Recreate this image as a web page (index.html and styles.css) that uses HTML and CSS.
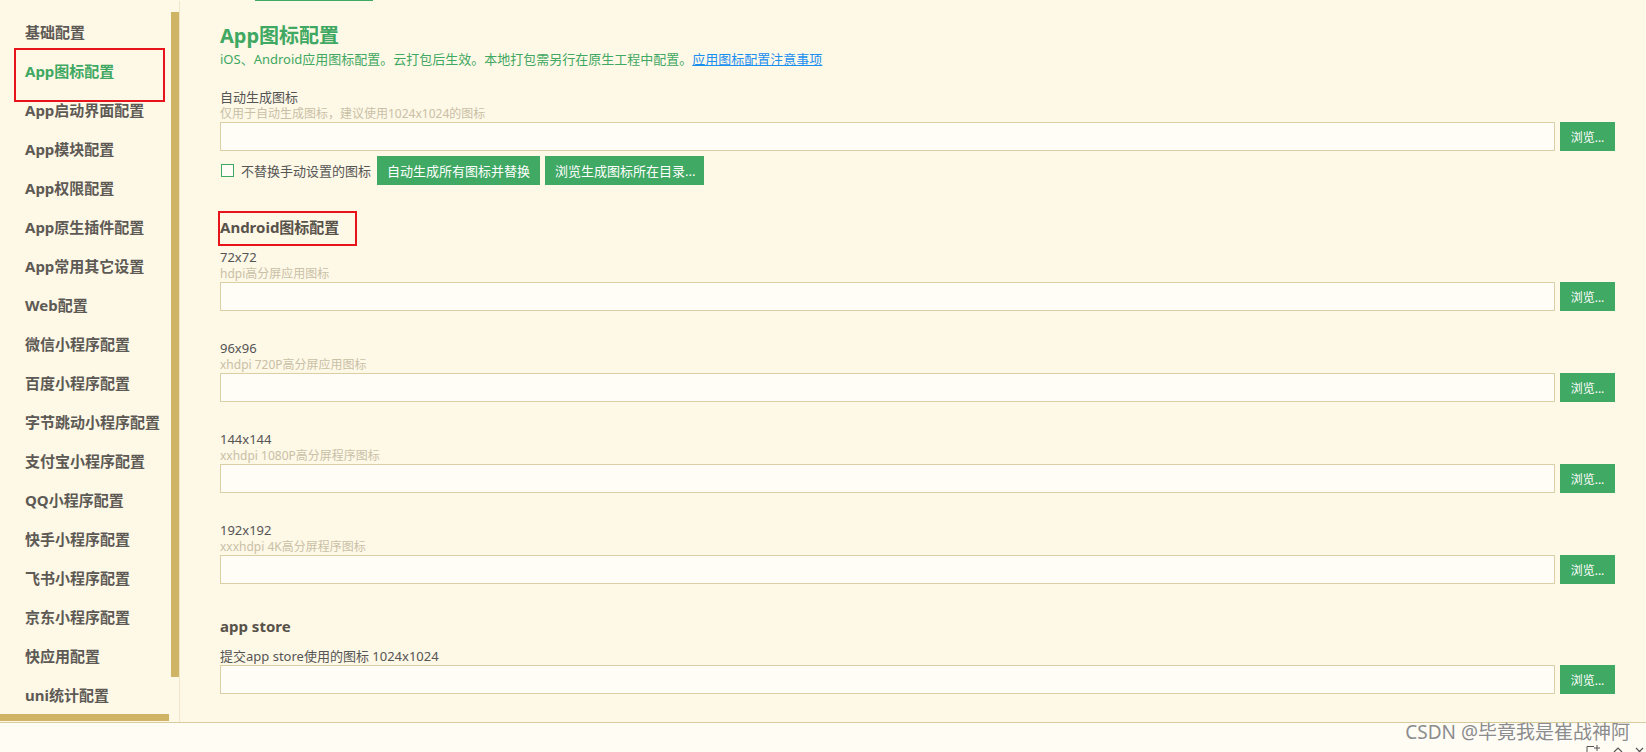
FILE: index.html
```html
<!DOCTYPE html>
<html lang="zh-CN">
<head>
<meta charset="utf-8">
<title>App图标配置</title>
<link rel="stylesheet" href="styles.css">
</head>
<body>
<div class="app">
  <div class="topline"></div>
  <div class="workspace">
    <aside class="sidebar">
      <div class="sidebar-top">
        <ul class="menu">
          <li>基础配置</li>
          <li class="active">App图标配置</li>
          <li>App启动界面配置</li>
          <li>App模块配置</li>
          <li>App权限配置</li>
          <li>App原生插件配置</li>
          <li>App常用其它设置</li>
          <li>Web配置</li>
          <li>微信小程序配置</li>
          <li>百度小程序配置</li>
          <li>字节跳动小程序配置</li>
          <li>支付宝小程序配置</li>
          <li>QQ小程序配置</li>
          <li>快手小程序配置</li>
          <li>飞书小程序配置</li>
          <li>京东小程序配置</li>
          <li>快应用配置</li>
          <li>uni统计配置</li>
        </ul>
        <div class="vscroll"><div class="vthumb"></div></div>
      </div>
      <div class="hscroll"></div>
    </aside>
    <main class="main">
      <h1 class="title">App图标配置</h1>
      <p class="desc">iOS、Android应用图标配置。云打包后生效。本地打包需另行在原生工程中配置。<a href="#" class="link">应用图标配置注意事项</a></p>

      <div class="field first">
        <div class="label">自动生成图标</div>
        <div class="hint">仅用于自动生成图标，建议使用1024x1024的图标</div>
        <div class="row"><div class="input"></div><button class="btn browse">浏览...</button></div>
      </div>
      <div class="checkrow">
        <span class="checkbox"></span>
        <span class="checklabel">不替换手动设置的图标</span>
        <button class="btn action a1">自动生成所有图标并替换</button>
        <button class="btn action a2">浏览生成图标所在目录...</button>
      </div>

      <div class="section"><h2 class="heading marked">Android图标配置</h2></div>

      <div class="field">
        <div class="label">72x72</div>
        <div class="hint">hdpi高分屏应用图标</div>
        <div class="row"><div class="input"></div><button class="btn browse">浏览...</button></div>
      </div>
      <div class="field">
        <div class="label">96x96</div>
        <div class="hint">xhdpi 720P高分屏应用图标</div>
        <div class="row"><div class="input"></div><button class="btn browse">浏览...</button></div>
      </div>
      <div class="field">
        <div class="label">144x144</div>
        <div class="hint">xxhdpi 1080P高分屏程序图标</div>
        <div class="row"><div class="input"></div><button class="btn browse">浏览...</button></div>
      </div>
      <div class="field">
        <div class="label">192x192</div>
        <div class="hint">xxxhdpi 4K高分屏程序图标</div>
        <div class="row"><div class="input"></div><button class="btn browse">浏览...</button></div>
      </div>

      <div class="section"><h2 class="heading">app store</h2></div>
      <div class="field tight">
        <div class="label">提交app store使用的图标 1024x1024</div>
        <div class="row"><div class="input"></div><button class="btn browse">浏览...</button></div>
      </div>
    </main>
  </div>
  <footer class="statusbar">
    <span class="watermark">CSDN @毕竟我是崔战神阿</span>
    <div class="winicons">
      <svg width="16" height="10" viewBox="0 0 16 10"><path d="M1 1.5 H8 M1 1.5 V10 M11 0 V6 M8 3 H14" stroke="#555" stroke-width="1" fill="none"/></svg>
      <svg width="12" height="10" viewBox="0 0 12 10"><path d="M2 7 L6 3 L10 7" stroke="#555" stroke-width="1.2" fill="none"/></svg>
      <svg width="12" height="10" viewBox="0 0 12 10"><path d="M2 3 L9 10 M9 3 L2 10" stroke="#555" stroke-width="1.2" fill="none"/></svg>
    </div>
  </footer>
</div>
</body>
</html>
```

FILE: styles.css
```css
* { box-sizing: border-box; }
html, body {
  margin: 0;
  padding: 0;
  height: 752px;
  overflow: hidden;
}
body {
  background: #fef8e6;
  font-family: "Noto Sans", "Noto Sans CJK SC", sans-serif;
  color: #555;
}
.app {
  display: flex;
  flex-direction: column;
  height: 752px;
}
.topline {
  height: 1px;
  width: 118px;
  margin-left: 255px;
  background: #3fa862;
  flex: none;
}
.workspace {
  display: flex;
  height: 722px;
  border-bottom: 1px solid #d8cba0;
  flex: none;
}
.sidebar {
  width: 179px;
  display: flex;
  flex-direction: column;
  flex: none;
}
.sidebar-top {
  flex: 1;
  display: flex;
  min-height: 0;
}
.menu {
  list-style: none;
  margin: 0;
  padding: 12px 0 0 0;
  width: 171px;
}
.menu li {
  height: 39px;
  line-height: 39px;
  padding-left: 25px;
  font-size: 15px;
  font-weight: bold;
  color: #5d5a55;
  white-space: nowrap;
}
.menu li.active {
  color: #3fa862;
  position: relative;
}
.menu li.active::after {
  content: "";
  position: absolute;
  left: 14px;
  top: -4px;
  width: 147px;
  height: 50px;
  border: 2px solid #e8141c;
}
.vscroll {
  width: 8px;
  padding-top: 11px;
}
.vthumb {
  height: 665px;
  background: #cfb466;
}
.hscroll {
  height: 7px;
  width: 169px;
  background: #cfb466;
  margin-bottom: 1px;
  flex: none;
}
.main {
  flex: 1;
  border-left: 1px solid #f0e6c8;
  padding: 22px 31px 0 40px;
  min-width: 0;
}
.title {
  margin: 0;
  font-size: 20px;
  line-height: 26px;
  font-weight: bold;
  color: #3fa862;
}
.desc {
  margin: 1px 0 0 0;
  font-size: 13px;
  line-height: 18px;
  color: #3fa862;
  white-space: nowrap;
}
.link {
  color: #1a8ff0;
  text-decoration: underline;
}
.field {
  margin-top: 28px;
}
.field.first {
  margin-top: 20px;
}
.section + .field {
  margin-top: 10px;
}
.label {
  font-size: 13px;
  line-height: 18px;
  color: #555;
  white-space: nowrap;
}
.hint {
  font-size: 12px;
  line-height: 16px;
  color: #c9c0a6;
  white-space: nowrap;
}
.row {
  display: flex;
  gap: 5px;
  height: 29px;
}
.input {
  flex: 1;
  height: 29px;
  border: 1px solid #dacfa5;
  background: #fffdf5;
}
.btn {
  border: 0;
  margin: 0;
  background: #40a964;
  color: #fff;
  font-family: "Noto Sans", "Noto Sans CJK SC", sans-serif;
  font-size: 13px;
  height: 29px;
  padding: 0;
  cursor: pointer;
  white-space: nowrap;
}
.browse {
  width: 55px;
  font-size: 12px;
}
.checkrow {
  display: flex;
  align-items: center;
  height: 29px;
  margin-top: 5px;
}
.checkbox {
  width: 13px;
  height: 13px;
  border: 1px solid #3fa862;
  margin-left: 1px;
  background: #fffdf5;
}
.checklabel {
  margin-left: 7px;
  font-size: 13px;
  color: #555;
}
.action {
  margin-left: 6px;
  padding: 0 10px;
}
.a1 { width: 163px; }
.a2 { width: 159px; margin-left: 5px; }
.section {
  margin-top: 31px;
}
.heading {
  display: inline-block;
  margin: 0;
  font-size: 15px;
  line-height: 20px;
  font-weight: bold;
  color: #57524a;
  position: relative;
}
.heading.marked::after {
  content: "";
  position: absolute;
  left: -2px;
  top: -6px;
  width: 135px;
  height: 31px;
  border: 2px solid #e8141c;
}
.statusbar {
  flex: 1;
  background: #fffcf3;
  position: relative;
}
.watermark {
  position: absolute;
  right: 16px;
  top: -3px;
  font-size: 19px;
  line-height: 24px;
  color: #8c8c8c;
  text-shadow: 1px 1px 0 #fff;
  white-space: nowrap;
  font-family: "Noto Sans", "Noto Sans CJK SC", sans-serif;
}
.winicons {
  position: absolute;
  top: 22px;
  right: 0;
  display: flex;
  gap: 10px;
  overflow: hidden;
  height: 7px;
}
```
